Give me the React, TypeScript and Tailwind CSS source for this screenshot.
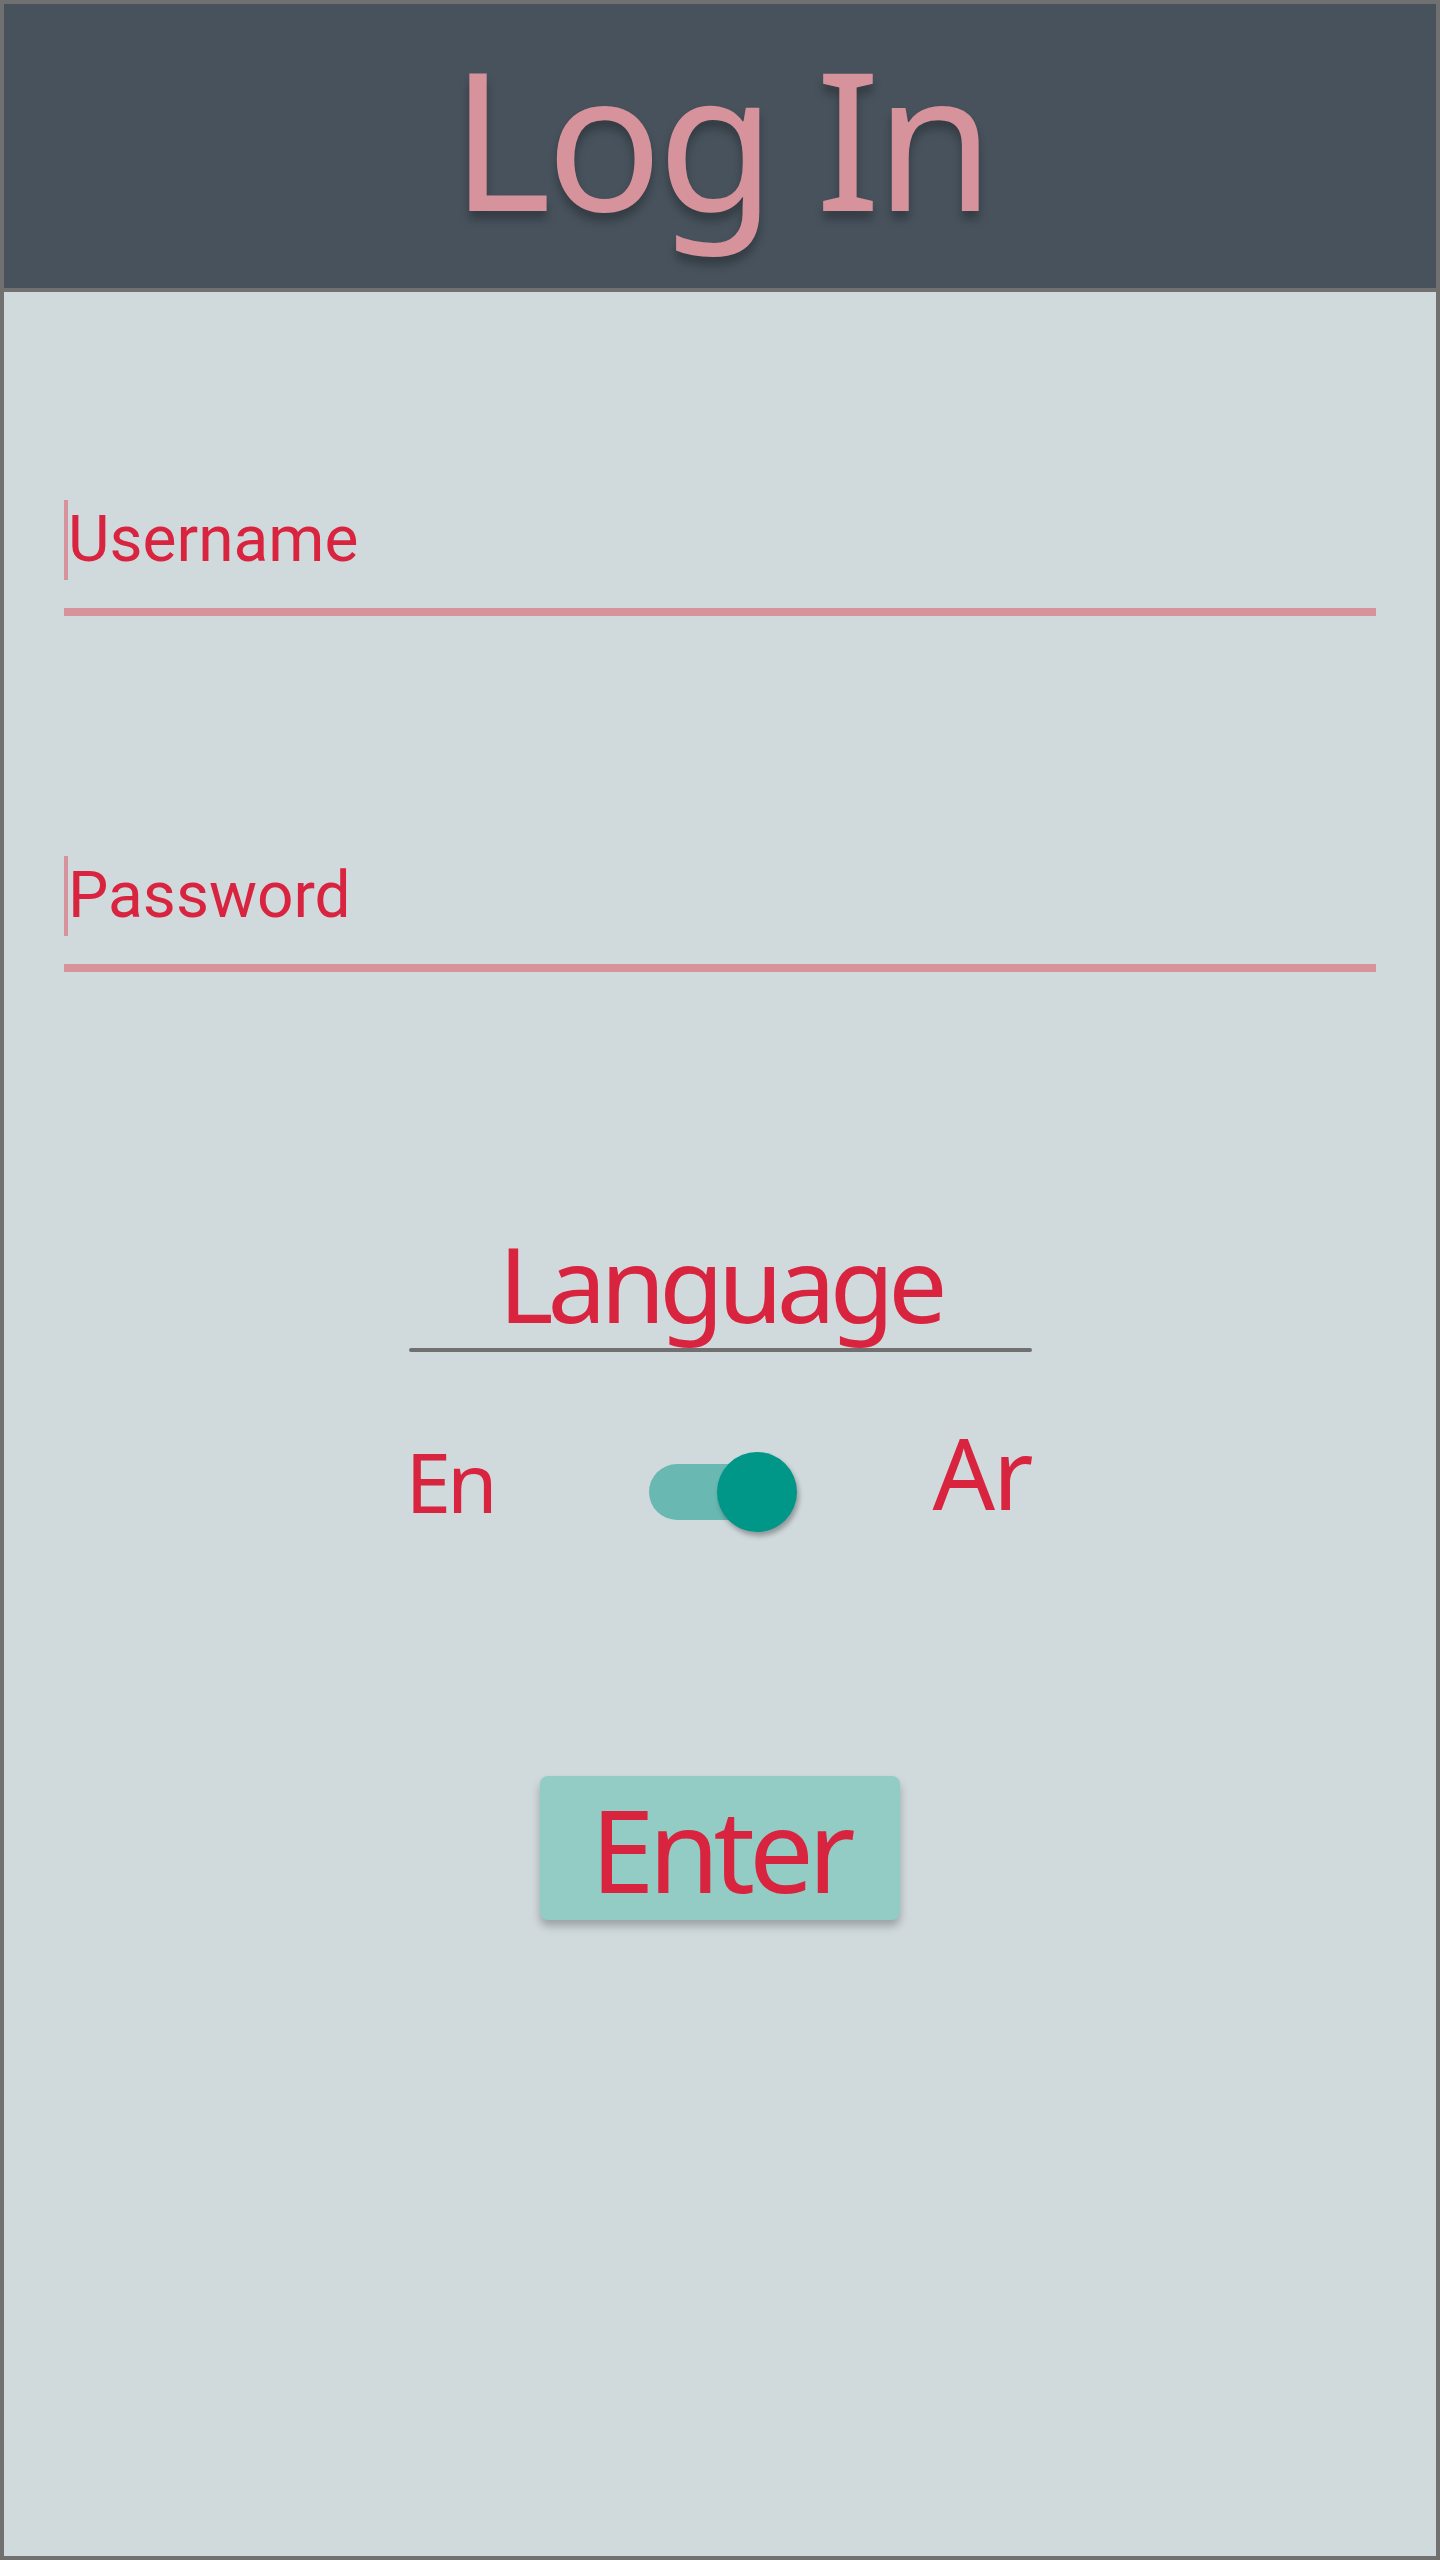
import React from 'react'

const humanist = '[font-family:"Noto_Sans","Open_Sans",sans-serif]'
const roboto = '[font-family:Roboto,"Noto_Sans",sans-serif]'

const Field: React.FC<{ label: string; className?: string }> = ({ label, className }) => (
  <div className={className}>
    <div className="flex h-[80px] items-center">
      <div className="h-full w-[4px] bg-[#d7939c]" />
      <span className={`${roboto} text-[64px] leading-none text-[#d9243f]`}>{label}</span>
    </div>
    <div className="mt-[28px] h-[8px] w-full bg-[#d7939c]" />
  </div>
)

const App: React.FC = () => {
  return (
    <div className="flex h-[2560px] w-[1440px] flex-col border-4 border-[#707070] bg-[#d0d9dc]">
      {/* header */}
      <div className="h-[288px] shrink-0 border-b-4 border-[#707070] bg-[#47525c] pt-[37px]">
        <h1
          className={`${humanist} text-center text-[192px] leading-none font-normal tracking-[-5px] text-[#d6939c] [text-shadow:0_8px_10px_rgba(0,0,0,0.28)]`}
        >
          Log In
        </h1>
      </div>

      {/* form */}
      <div className="px-[60px]">
        <Field label="Username" className="mt-[208px]" />
        <Field label="Password" className="mt-[240px]" />
      </div>

      {/* language */}
      <div className="mx-auto mt-[258px] w-[623px]">
        <p className={`${humanist} text-center text-[105px] leading-none tracking-[-6px] text-[#d9243f]`}>
          Language
        </p>
        <div className="mt-[13px] h-[4px] w-full rounded-full bg-[#707070]" />

        <div className="mt-[71px] flex items-start">
          <div className="w-[240px]">
            <span
              className={`${humanist} -ml-[3px] mt-[17px] block text-[82px] leading-none tracking-[-4px] text-[#d9243f]`}
            >
              En
            </span>
          </div>
          <div className="relative mt-[29px] h-[80px] w-[147px]">
            <div className="absolute left-0 top-[12px] h-[56px] w-[132px] rounded-full bg-[#69b8b2]" />
            <div className="absolute left-[68px] top-0 size-[80px] rounded-full bg-[#009688] shadow-[2px_4px_5px_rgba(0,0,0,0.3)]" />
          </div>
          <div className="flex-1 text-right">
            <span className={`${humanist} text-[98px] leading-none tracking-[-2px] text-[#d9243f]`}>Ar</span>
          </div>
        </div>
      </div>

      {/* submit */}
      <div className="mt-[244px] flex justify-center">
        <button
          className={`${humanist} flex h-[144px] w-[360px] items-center justify-center rounded-[8px] bg-[#93cbc5] text-[115px] leading-none tracking-[-6px] text-[#d9243f] shadow-[0_6px_8px_rgba(0,0,0,0.25)]`}
        >
          Enter
        </button>
      </div>
    </div>
  )
}

export default App
